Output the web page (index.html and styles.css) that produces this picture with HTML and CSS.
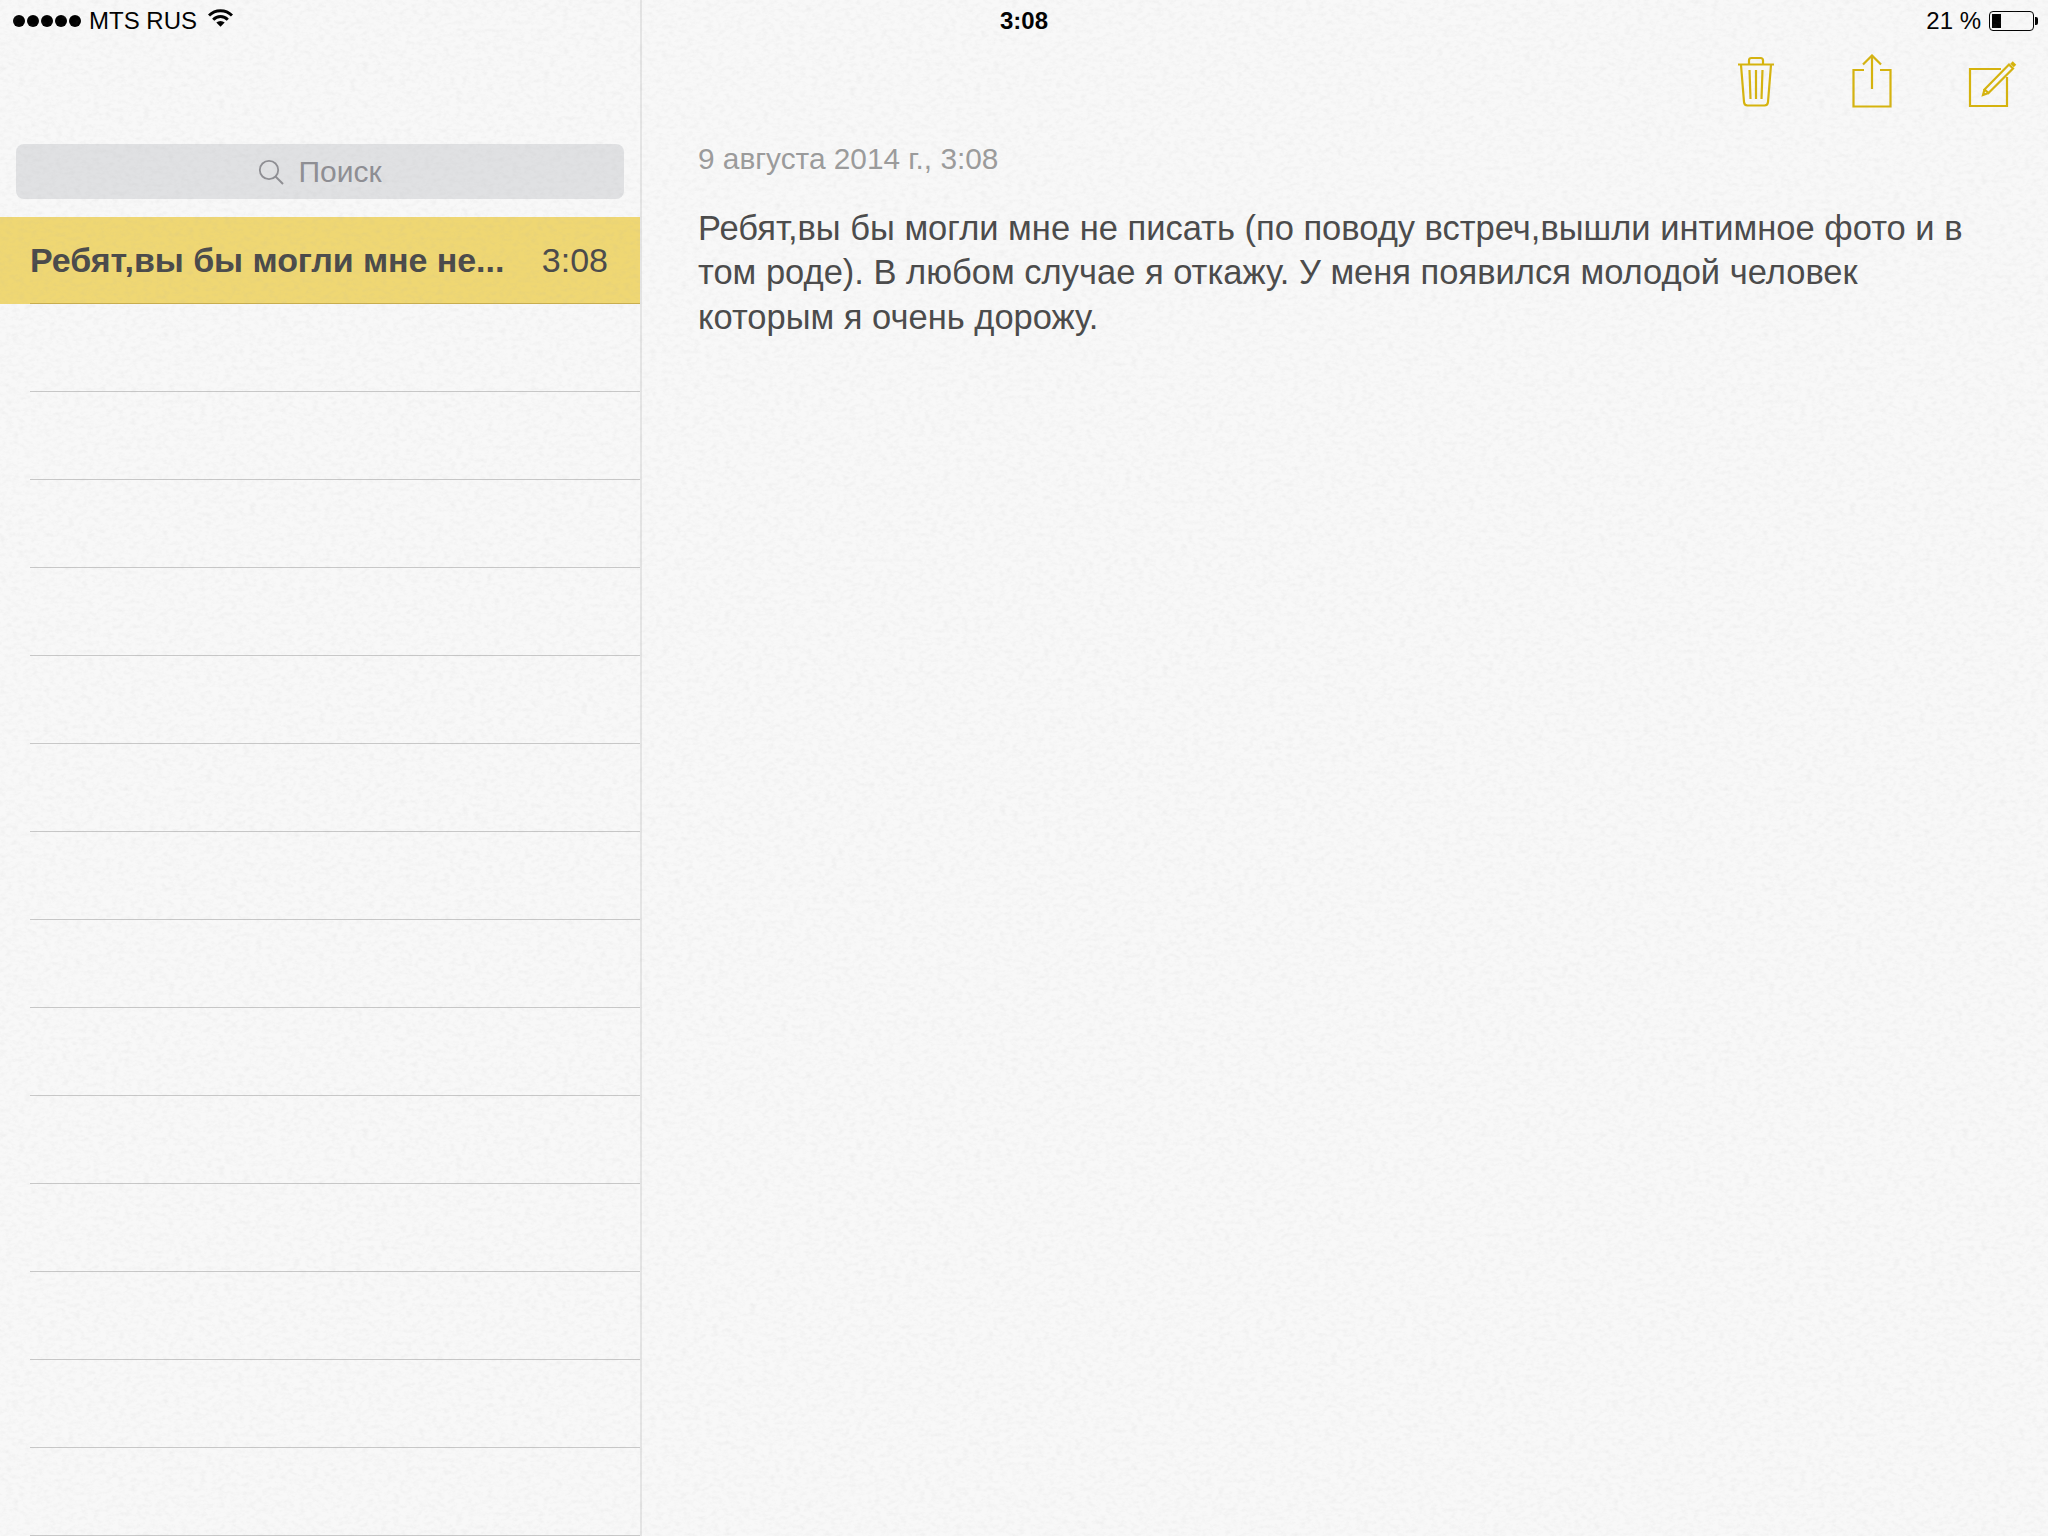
FILE: index.html
```html
<!DOCTYPE html>
<html lang="ru">
<head>
    <meta charset="UTF-8">
    <title>Заметки</title>
    <link rel="stylesheet" href="styles.css">
</head>
<body>
<div class="app">
    <div class="status">
        <div class="status-left">
            <span class="signal"><i></i><i></i><i></i><i></i><i></i></span>
            <span>MTS RUS</span>
            <svg class="wifi" width="25" height="18" viewBox="0 0 25 18">
                <path d="M1 6.500a16.200 16.200 0 0 1 23 0" fill="none" stroke="#000" stroke-width="3"/>
                <path d="M5.200 10.700a10.200 10.200 0 0 1 14.600 0" fill="none" stroke="#000" stroke-width="3"/>
                <path d="M8.300 13.600a6 6 0 0 1 8.400 0L12.500 17.800z" fill="#000"/>
            </svg>
        </div>
        <div class="clock">3:08</div>
        <div class="status-right">
            <span>21 %</span>
            <span class="battery"><span class="battery-level"></span></span>
        </div>
    </div>

    <aside class="sidebar">
        <div class="search">
            <svg width="26" height="26" viewBox="0 0 26 26">
                <circle cx="11" cy="11" r="9.200" fill="none" stroke="#8e8e93" stroke-width="1.800"/>
                <path d="M17.500 17.500L25 25" stroke="#8e8e93" stroke-width="2"/>
            </svg>
            <span>Поиск</span>
        </div>
        <ul class="notes">
            <li class="note active">
                <span class="note-title">Ребят,вы бы могли мне не...</span>
                <span class="note-time">3:08</span>
            </li>
            <li class="note"></li>
            <li class="note"></li>
            <li class="note"></li>
            <li class="note"></li>
            <li class="note"></li>
            <li class="note"></li>
            <li class="note"></li>
            <li class="note"></li>
            <li class="note"></li>
            <li class="note"></li>
            <li class="note"></li>
            <li class="note"></li>
            <li class="note"></li>
            <li class="note"></li>
        </ul>
    </aside>

    <main class="editor">
        <div class="toolbar">
            <svg width="40" height="52" viewBox="0 0 40 52" fill="none" stroke="#d6b30c" stroke-width="2.200">
                <path d="M2 8.500h36"/>
                <path d="M13 8V4.500Q13 2 15.500 2h9Q27 2 27 4.500V8"/>
                <path d="M5 9l3 37q.3 3.500 3.500 3.500h17q3.200 0 3.500-3.500l3-37"/>
                <path d="M13.500 14l1 29M20 14v29M26.500 14l-1 29"/>
            </svg>
            <svg width="40" height="54" viewBox="0 0 40 54" fill="none" stroke="#d6b30c" stroke-width="2.200">
                <path d="M12 16H1.500v36.500h37V16H28"/>
                <path d="M20 1.500V35"/>
                <path d="M11 10.500l9-9 9 9"/>
            </svg>
            <svg width="50" height="48" viewBox="0 0 50 48" fill="none" stroke="#d6b30c" stroke-width="2.200">
                <path d="M33 9H2v37h37V17"/>
                <path d="M16.500 29.500L41 4.500l4 4L20.500 33z"/>
                <path d="M16.500 29.500l-1.500 5.500 5.500-2"/>
                <path d="M43.500 2.500l3.500 3.500" stroke-width="3.500"/>
            </svg>
        </div>
        <div class="note-date">9 августа 2014 г., 3:08</div>
        <p class="note-body">Ребят,вы бы могли мне не писать (по поводу встреч,вышли интимное фото и в<br>том роде). В любом случае я откажу. У меня появился молодой человек<br>которым я очень дорожу.</p>
    </main>

    <!-- paper grain over everything -->
    <svg class="grain" width="2048" height="1536">
        <filter id="paper" x="0" y="0" width="100%" height="100%">
            <feTurbulence type="fractalNoise" baseFrequency="0.16 0.24" numOctaves="3" seed="4"/>
            <feColorMatrix type="matrix" values="0 0 0 0 0.4  0 0 0 0 0.4  0 0 0 0 0.4  1.2 1.2 0 0 -1.05"/>
        </filter>
        <rect width="2048" height="1536" filter="url(#paper)" opacity="0.12"/>
    </svg>
</div>
</body>
</html>
```

FILE: styles.css
```css
* {
    box-sizing: border-box;
}
body {
    margin: 0;
    font-family: "Liberation Sans", Arial, sans-serif;
    background-color: #f8f8f8;
}
.app {
    position: relative;
    display: flex;
    width: 2048px;
    height: 1536px;
    overflow: hidden;
    background-color: #f8f8f8;
}
.grain {
    position: absolute;
    top: 0;
    left: 0;
    pointer-events: none;
}

/* status bar lies over both columns */
.status {
    position: absolute;
    top: 0;
    left: 0;
    right: 0;
    height: 42px;
    display: grid;
    grid-template-columns: 1fr auto 1fr;
    align-items: center;
    padding: 0 11px 0 13px;
    font-size: 24px;
    color: #000;
}
.status-left {
    display: flex;
    align-items: center;
}
.signal {
    display: flex;
    gap: 2px;
    margin-right: 8px;
}
.signal i {
    width: 12px;
    height: 12px;
    border-radius: 50%;
    background-color: #000;
}
.wifi {
    margin-left: 11px;
    margin-top: -6px;
}
.clock {
    font-weight: bold;
    margin-left: -2px;
}
.status-right {
    display: flex;
    align-items: center;
    justify-content: flex-end;
    gap: 8px;
    padding-right: 3px;
}
.battery {
    position: relative;
    width: 45px;
    height: 20px;
    padding: 2px;
    border: 1px solid #000;
    border-radius: 4px;
}
.battery:after {
    content: '';
    position: absolute;
    top: 5px;
    right: -5px;
    width: 3px;
    height: 8px;
    background-color: #000;
    border-radius: 0 2px 2px 0;
}
.battery-level {
    display: block;
    width: 9px;
    height: 100%;
    background-color: #000;
}

.sidebar {
    width: 642px;
    flex-shrink: 0;
    padding-top: 144px;
    border-right: 2px solid #e4e4e4;
}
.search {
    display: flex;
    align-items: center;
    justify-content: center;
    gap: 14px;
    height: 55px;
    margin: 0 16px 18px;
    border-radius: 8px;
    background-color: #e0e1e3;
    font-size: 30px;
    color: #8e8e93;
}
.notes {
    list-style: none;
    margin: 0;
    padding: 0;
}
.note {
    height: 88px;
    position: relative;
}
.note:after {
    content: '';
    position: absolute;
    left: 30px;
    right: 0;
    bottom: 0;
    height: 1px;
    background-color: #c8c8c8;
}
.note.active {
    display: flex;
    justify-content: space-between;
    align-items: center;
    height: 87px;
    padding: 0 32px 0 30px;
    background-color: #efd773;
    color: #4a4a4a;
}
.note.active:after {
    background-color: #c9ae4e;
}
.note-title {
    font-size: 34px;
    font-weight: bold;
    letter-spacing: -0.05px;
}
.note-time {
    font-size: 34px;
}

.editor {
    flex: 1;
    padding-left: 56px;
}
.toolbar {
    display: flex;
    justify-content: flex-end;
    align-items: flex-end;
    gap: 76px;
    height: 108px;
    padding-right: 30px;
}
.note-date {
    margin-top: 31px;
    font-size: 29.8px;
    line-height: 40px;
    color: #9b9b9b;
}
.note-body {
    margin: 27px 0 0;
    font-size: 34.5px;
    line-height: 44.400px;
    color: #4a4a4a;
}
```
